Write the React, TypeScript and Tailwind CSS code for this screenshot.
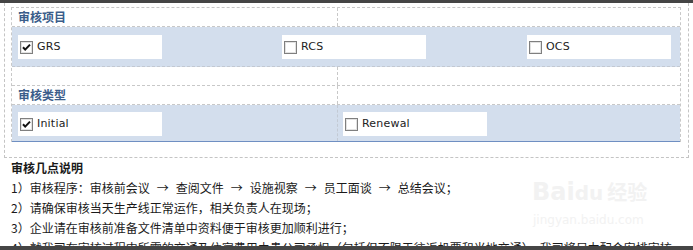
import React from "react";

function Box({ checked }: { checked?: boolean }) {
  return (
    <svg width="13" height="13" viewBox="0 0 13 13" className="shrink-0">
      <rect x="0.5" y="0.5" width="12" height="12" fill="#ffffff" stroke="#7f7f7f" />
      <rect x="1.5" y="1.5" width="10" height="10" fill="none" stroke="#e2e2e2" />
      {checked && (
        <path d="M3 6.2 L5.2 8.6 L10 3.6" fill="none" stroke="#111" strokeWidth="2" />
      )}
    </svg>
  );
}

function Item({ label, checked }: { label: string; checked?: boolean }) {
  return (
    <div className="w-[144px] h-[24px] bg-white flex items-center pl-[2px] gap-[4px] text-[11px] text-[#222]" style={{ fontFamily: '"DejaVu Sans", Verdana, sans-serif' }}>
      <Box checked={checked} />
      <span className="tracking-[0.2px]">{label}</span>
    </div>
  );
}

export default function App() {
  const cjk = '"Noto Sans CJK SC", "Noto Sans", sans-serif';
  return (
    <div className="relative w-[693px] h-[250px] bg-white overflow-hidden" style={{ fontFamily: cjk }}>
      <div className="h-[3px] bg-[#454545]" />
      <div className="ml-[4px] w-[685px] border-x border-b border-dashed border-[#c4c4c4] pt-[4px] pl-[6px] pb-[15px]">
        <div className="w-[670px] border-x border-t border-dashed border-[#c8c8c8]">
          {/* header 1 */}
          <div className="flex h-[19px] border-b border-dashed border-[#c8c8c8]">
            <div className="w-[326px] border-r border-dashed border-[#c8c8c8] pl-[6px] flex items-center text-[12px] font-bold text-[#3b5d8a]">
              审核项目
            </div>
            <div className="flex-1" />
          </div>
          {/* blue row 1 */}
          <div className="h-[40px] bg-[#d3deed] border-b border-dashed border-[#c3c9d2] flex items-start pt-[8px] pl-[6px]">
            <div className="w-[264px]">
              <Item label="GRS" checked />
            </div>
            <div className="w-[245px]">
              <Item label="RCS" />
            </div>
            <div>
              <Item label="OCS" />
            </div>
          </div>
          {/* spacer */}
          <div className="flex h-[19px] border-b border-dashed border-[#c8c8c8]">
            <div className="w-[326px] border-r border-dashed border-[#c8c8c8]" />
            <div className="flex-1" />
          </div>
          {/* header 2 */}
          <div className="flex h-[19px] border-b border-dashed border-[#c8c8c8]">
            <div className="w-[326px] border-r border-dashed border-[#c8c8c8] pl-[6px] flex items-center text-[12px] font-bold text-[#3b5d8a]">
              审核类型
            </div>
            <div className="flex-1" />
          </div>
          {/* blue row 2 */}
          <div className="flex h-[37px] bg-[#d3deed] border-b border-[#6f8fc2]">
            <div className="w-[326px] border-r border-dashed border-[#c3cad4] pl-[6px] pt-[7px]">
              <Item label="Initial" checked />
            </div>
            <div className="flex-1 pl-[5px] pt-[7px]">
              <Item label="Renewal" />
            </div>
          </div>
        </div>
      </div>
      <div className="pl-[11px] text-[12px] leading-[20px] text-[#1a1a1a]">
        <div className="font-bold">审核几点说明</div>
        <div className="whitespace-nowrap flex items-center">
          <span>1）审核程序：审核前会议</span>
          <span className="mx-[7px]">→</span>
          <span>查阅文件</span>
          <span className="mx-[7px]">→</span>
          <span>设施视察</span>
          <span className="mx-[7px]">→</span>
          <span>员工面谈</span>
          <span className="mx-[7px]">→</span>
          <span>总结会议；</span>
        </div>
        <div>2）请确保审核当天生产线正常运作，相关负责人在现场；</div>
        <div>3）企业请在审核前准备文件清单中资料便于审核更加顺利进行；</div>
        <div className="whitespace-nowrap">4）就我司在审核过程中所需的交通及住宿费用由贵公司承担（包括但不限于往返机票和当地交通），我司将尽力配合安排审核。</div>
      </div>
      {/* watermark */}
      <div className="absolute left-[532px] top-[180px] text-[24px] leading-none font-bold text-[#f2f2f2] select-none whitespace-nowrap" style={{ fontFamily: '"DejaVu Sans", sans-serif' }}>
        Bai<span className="text-[20px]">du</span>
        <span className="text-[20px] ml-[4px]" style={{ fontFamily: cjk }}>经验</span>
      </div>
      <div className="absolute left-[533px] top-[214px] text-[12px] leading-none text-[#f2f2f2] select-none whitespace-nowrap" style={{ fontFamily: '"DejaVu Sans", sans-serif' }}>
        jingyan.baidu.com
      </div>
      <div className="absolute left-0 right-0 bottom-0 h-[4px] bg-[#454545]" />
    </div>
  );
}
